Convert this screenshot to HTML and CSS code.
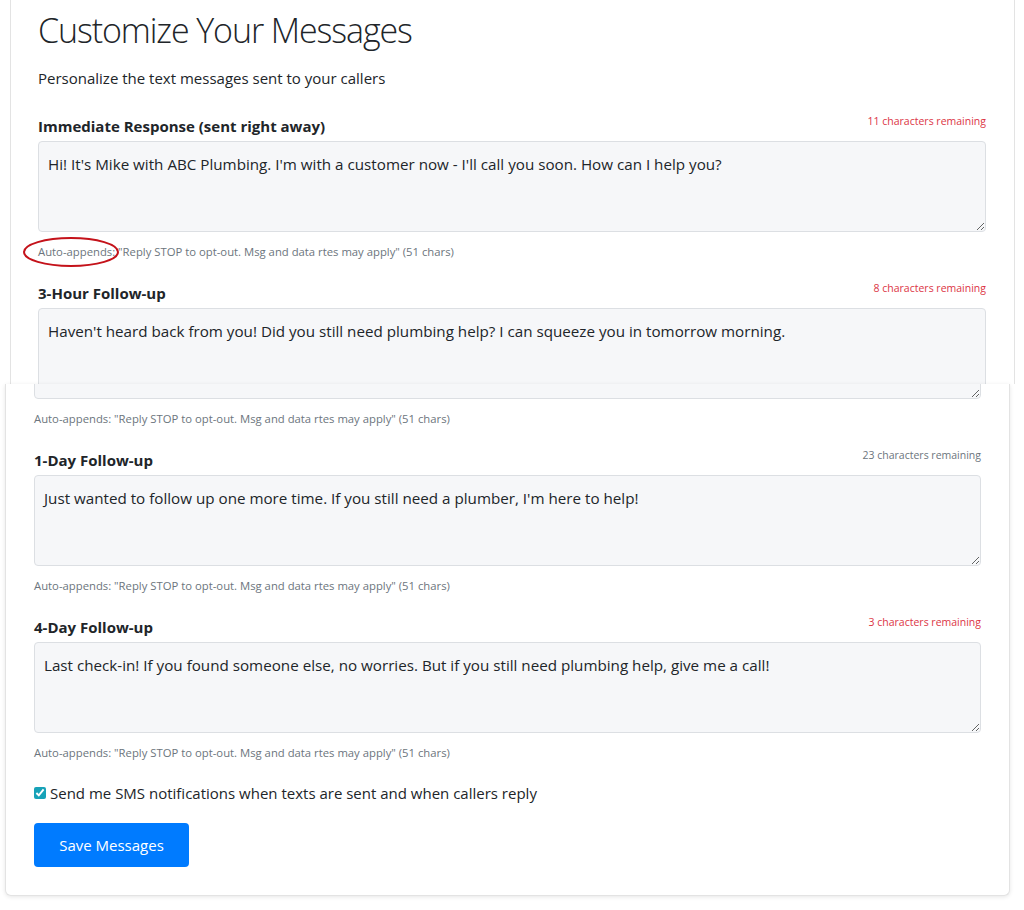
FILE: index.html
```html
<!DOCTYPE html>
<html lang="en">
<head>
    <meta charset="UTF-8">
    <meta name="viewport" content="width=device-width, initial-scale=1.0">
    <title>Customize Your Messages</title>
    <link rel="stylesheet" href="styles.css">
</head>
<body>
    <div class="slice slice-top">
        <div class="card card-top">
            <h1>Customize Your Messages</h1>
            <p class="lead">Personalize the text messages sent to your callers</p>

            <div class="field">
                <div class="field-head">
                    <label for="msgNow">Immediate Response (sent right away)</label>
                    <span class="counter warn">11 characters remaining</span>
                </div>
                <textarea id="msgNow">Hi! It's Mike with ABC Plumbing. I'm with a customer now - I'll call you soon. How can I help you?</textarea>
                <div class="hint">
                    <svg class="mark" width="98" height="32" viewBox="0 0 98 32"><ellipse cx="49" cy="16" rx="47" ry="14" fill="none" stroke="#c4121a" stroke-width="2"/></svg>
                    Auto-appends: "Reply STOP to opt-out. Msg and data rtes may apply" (51 chars)
                </div>
            </div>

            <div class="field">
                <div class="field-head">
                    <label for="msg3h">3-Hour Follow-up</label>
                    <span class="counter warn">8 characters remaining</span>
                </div>
                <textarea id="msg3h">Haven't heard back from you! Did you still need plumbing help? I can squeeze you in tomorrow morning.</textarea>
            </div>
        </div>
    </div>

    <div class="slice slice-bottom">
        <div class="card card-bottom">
            <div class="field">
                <textarea class="tail">Haven't heard back from you! Did you still need plumbing help? I can squeeze you in tomorrow morning.</textarea>
                <div class="hint">Auto-appends: "Reply STOP to opt-out. Msg and data rtes may apply" (51 chars)</div>
            </div>

            <div class="field">
                <div class="field-head">
                    <label for="msg1d">1-Day Follow-up</label>
                    <span class="counter">23 characters remaining</span>
                </div>
                <textarea id="msg1d">Just wanted to follow up one more time. If you still need a plumber, I'm here to help!</textarea>
                <div class="hint">Auto-appends: "Reply STOP to opt-out. Msg and data rtes may apply" (51 chars)</div>
            </div>

            <div class="field">
                <div class="field-head">
                    <label for="msg4d">4-Day Follow-up</label>
                    <span class="counter warn">3 characters remaining</span>
                </div>
                <textarea id="msg4d">Last check-in! If you found someone else, no worries. But if you still need plumbing help, give me a call!</textarea>
                <div class="hint">Auto-appends: "Reply STOP to opt-out. Msg and data rtes may apply" (51 chars)</div>
            </div>

            <label class="check">
                <input type="checkbox" checked>
                Send me SMS notifications when texts are sent and when callers reply
            </label>

            <button class="btn-save">Save Messages</button>
        </div>
    </div>
</body>
</html>
```

FILE: styles.css
```css
body {
    margin: 0;
    background: #fff;
    font-family: 'Open Sans', 'Noto Sans', sans-serif;
    color: #212529;
}

.slice {
    width: 1005px;
}

.slice-top {
    height: 384px;
    overflow: hidden;
    margin-left: 10px;
}

.slice-bottom {
    margin-left: 5px;
    padding-bottom: 12px;
}

.card {
    background: #fff;
    border: 1px solid #e3e3e3;
    box-shadow: 0 1px 4px rgba(0, 0, 0, 0.1);
    box-sizing: border-box;
    padding: 0 28px;
}

.card-top {
    border-top: none;
    border-bottom: none;
    height: 400px;
    padding-left: 27px;
    padding-top: 6px;
}

.card-bottom {
    border-top: none;
    border-radius: 0 0 6px 6px;
    overflow: hidden;
    padding-bottom: 28px;
}

h1 {
    margin: 0;
    font-size: 34px;
    font-weight: 300;
    line-height: 48px;
    letter-spacing: -1.1px;
}

.lead {
    margin: 12px 0 24px;
    font-size: 15px;
    line-height: 24px;
}

.field {
    margin-bottom: 20px;
}

.field-head {
    display: flex;
    justify-content: space-between;
    align-items: flex-start;
    height: 24px;
    margin-bottom: 3px;
}

.field-head label {
    font-size: 15px;
    font-weight: 700;
    line-height: 24px;
}

.counter {
    font-size: 10.5px;
    line-height: 14px;
    color: #6c757d;
}

.counter.warn {
    color: #dc3545;
}

textarea {
    display: block;
    box-sizing: border-box;
    width: 100%;
    height: 91px;
    margin: 0;
    padding: 10px 9px;
    border: 1px solid #dcdfe3;
    border-radius: 4px;
    background: #f6f7f9;
    font-family: inherit;
    font-size: 15.2px;
    line-height: 24px;
    color: #212529;
}

textarea.tail {
    margin-top: -76px;
}

.hint {
    position: relative;
    margin-top: 11px;
    font-size: 11.3px;
    line-height: 18px;
    color: #6c757d;
}

.mark {
    position: absolute;
    left: -16px;
    top: -7px;
}

.check {
    display: flex;
    align-items: center;
    font-size: 15px;
    line-height: 22px;
}

.check input {
    width: 12px;
    height: 12px;
    margin: 0 4px 0 0;
    accent-color: #17a2b8;
}

.btn-save {
    display: block;
    margin-top: 19px;
    height: 44px;
    width: 155px;
    padding: 0;
    border: none;
    border-radius: 4px;
    background: #007bff;
    color: #fff;
    font-family: inherit;
    font-size: 15px;
}
```
